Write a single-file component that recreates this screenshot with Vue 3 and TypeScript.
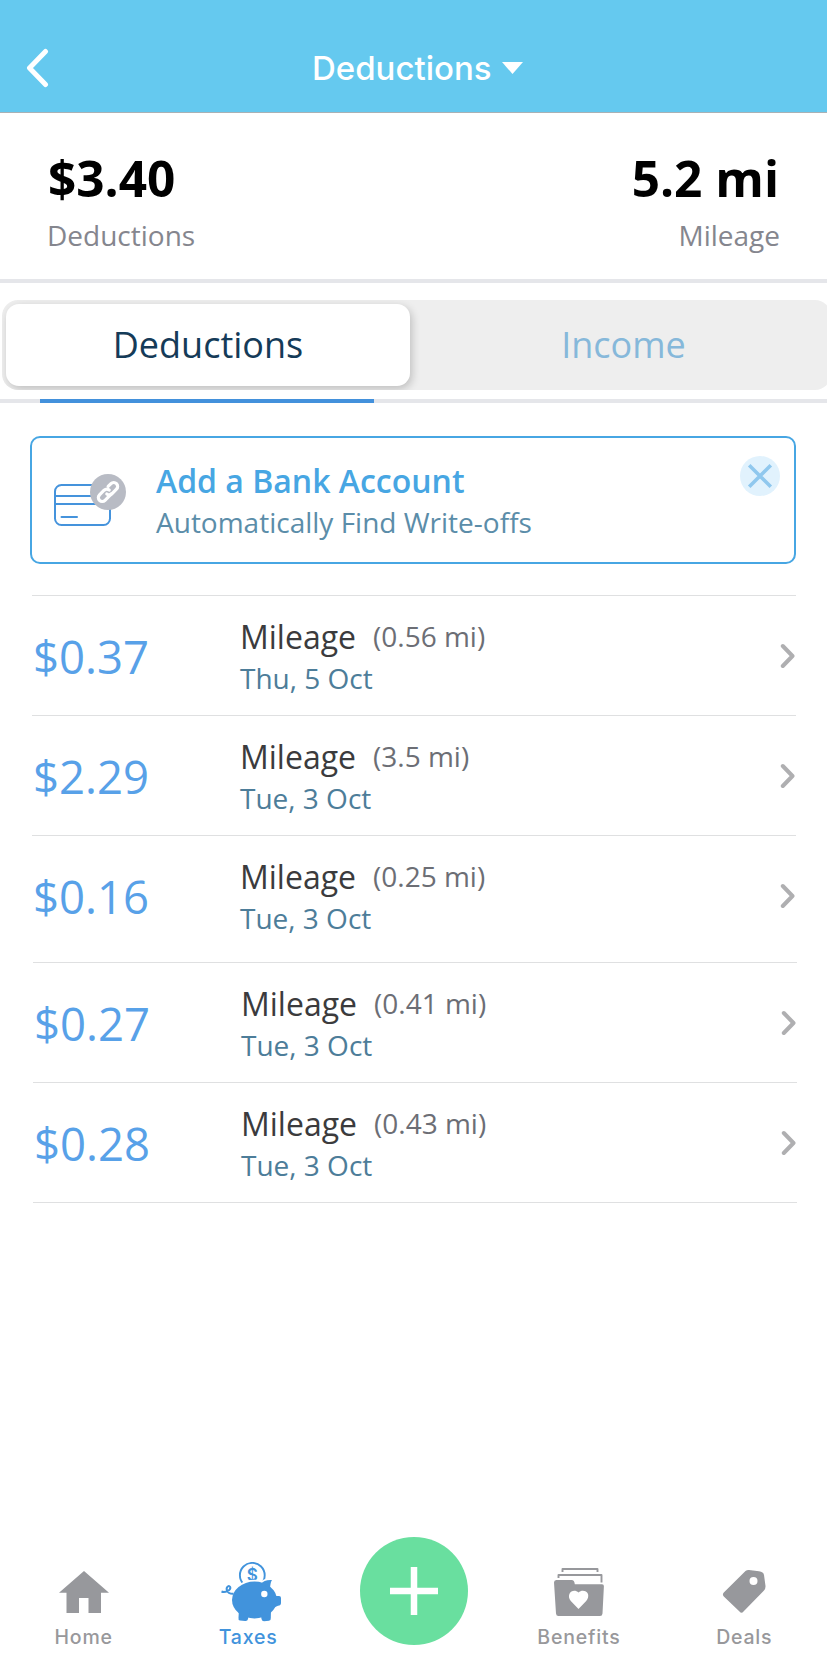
<script setup lang="ts">
import { ref } from 'vue'

interface Entry {
  amount: string
  distance: string
  date: string
}

const groups: Entry[][] = [
  [
    { amount: '$0.37', distance: '(0.56 mi)', date: 'Thu, 5 Oct' },
    { amount: '$2.29', distance: '(3.5 mi)', date: 'Tue, 3 Oct' },
    { amount: '$0.16', distance: '(0.25 mi)', date: 'Tue, 3 Oct' },
  ],
  [
    { amount: '$0.27', distance: '(0.41 mi)', date: 'Tue, 3 Oct' },
    { amount: '$0.28', distance: '(0.43 mi)', date: 'Tue, 3 Oct' },
  ],
]

const tabs = ['Deductions', 'Income']
const activeTab = ref('Deductions')
</script>

<template>
  <div class="screen">
    <header class="topbar">
      <svg class="back" width="24" height="40" viewBox="0 0 24 40">
        <path d="M20.5 3.5 L4.5 20 L20.5 36.5" />
      </svg>
      <h1 class="title">Deductions</h1>
      <svg class="caret" width="21" height="12" viewBox="0 0 21 12"><path d="M0 0H21L10.5 12Z" /></svg>
    </header>

    <section class="stats">
      <div class="stat">
        <div class="stat-value">$3.40</div>
        <div class="stat-label">Deductions</div>
      </div>
      <div class="stat right">
        <div class="stat-value">5.2 mi</div>
        <div class="stat-label">Mileage</div>
      </div>
    </section>

    <nav class="tabs-wrap">
      <div class="tabs">
        <button
          v-for="tab in tabs"
          :key="tab"
          class="tab"
          :class="{ active: tab === activeTab }"
          @click="activeTab = tab"
        >{{ tab }}</button>
      </div>
    </nav>
    <div class="track"><div class="indicator"></div></div>

    <section class="banner">
      <svg class="card-icon" width="74" height="60" viewBox="0 0 74 60">
        <g fill="none" stroke="#4593dc" stroke-width="2">
          <rect x="3" y="15" width="55" height="40" rx="6.5" />
          <path d="M3 26H58M3 34H58" />
          <path d="M9.500 47H25" stroke-linecap="round" />
        </g>
        <circle cx="56" cy="22" r="18" fill="#b8bbc4" />
        <g transform="translate(56 22) rotate(-45)" fill="none" stroke="#fff" stroke-width="3.200" stroke-linecap="round">
          <path d="M1 3.800H-8A3.900 3.900 0 0 1 -8 -4H-1.500A4 4 0 0 1 2.300 -.6" />
          <path d="M-1 -3.800M4 -3.800H8A3.900 3.900 0 0 1 8 4H1.500A4 4 0 0 1 -2.300 .6" />
        </g>
      </svg>
      <div class="banner-text">
        <div class="banner-title">Add a Bank Account</div>
        <div class="banner-sub">Automatically Find Write-offs</div>
      </div>
      <svg class="close" width="40" height="40" viewBox="0 0 40 40">
        <circle cx="20" cy="20" r="20" fill="#e1f2fd" />
        <path d="M9.200 9.200L30.800 30.800M30.800 9.200L9.200 30.800" stroke="#90c8ee" stroke-width="3.600" />
      </svg>
    </section>

    <main class="list">
      <div v-for="(group, g) in groups" :key="g" class="group">
        <article v-for="(entry, i) in group" :key="i" class="row">
          <div class="amount">{{ entry.amount }}</div>
          <div class="info">
            <div class="line">
              <span class="kind">Mileage</span>
              <span class="distance">{{ entry.distance }}</span>
            </div>
            <div class="date">{{ entry.date }}</div>
          </div>
          <svg class="chevron" width="16" height="26" viewBox="0 0 16 26">
            <path d="M2.800 3L12.500 13L2.800 23" />
          </svg>
        </article>
      </div>
    </main>

    <footer class="bottom">
      <a class="item home">
        <svg width="60" height="60" viewBox="0 0 60 60">
          <path fill="#97989c" d="M30 9L55 30.700H47V51H34.500V36H25V51H12.500V30.700H5Z" />
        </svg>
        <span>Home</span>
      </a>
      <a class="item current">
        <svg width="60" height="60" viewBox="0 0 60 60">
          <circle cx="31.300" cy="13.300" r="12.400" fill="none" stroke="#4193dc" stroke-width="1.900" />
          <text x="31.300" y="19.300" text-anchor="middle" class="coin">$</text>
          <g stroke="#fff" stroke-width="3.600" fill="#fff" stroke-linejoin="round">
            <ellipse cx="33.500" cy="38" rx="22.500" ry="18.500" />
            <path d="M40 22Q43 17.500 51 18L49.500 26Z" />
          </g>
          <g fill="#4193dc">
            <ellipse cx="33.500" cy="38" rx="22.500" ry="18.500" />
            <path d="M40 22Q43 17.500 51 18Q49.500 20 49 26Z" />
            <path d="M52 33.500C54 34 55 34 58 34Q60 34 60 36V41Q60 43.500 57 43.800L52 46Z" />
            <path d="M18 47H29L27 57Q26.500 59.500 24 59L19 58.500Q17 58 17.500 55.500Z" />
            <path d="M39 47H50L49.800 56Q50 58.500 48 58.700L43 59.300Q41 59.300 40.500 57Z" />
          </g>
          <path d="M0.500 29.500C4 31 10 28.500 9.300 25.300C8.600 22.500 4.500 25 6 28.500C7 31 9.500 32 12.500 31.800" fill="none" stroke="#4193dc" stroke-width="2" />
          <circle cx="43.300" cy="32" r="3.200" fill="#fff" />
        </svg>
        <span>Taxes</span>
      </a>
      <button class="fab" aria-label="Add">
        <svg width="48" height="48" viewBox="0 0 48 48">
          <path d="M24 0V48M0 24H48" stroke="#fff" stroke-width="6.500" />
        </svg>
      </button>
      <a class="item benefits">
        <svg width="60" height="60" viewBox="0 0 60 60">
          <g fill="none" stroke="#97989c" stroke-width="1.900" stroke-linejoin="round">
            <path d="M13.500 10V7H48.500V10" />
            <path d="M9.500 16V13H52.500V20.500" />
          </g>
          <path fill="#97989c" d="M7.300 18H22.500Q25.500 18 25.800 22.300H53Q55 22.300 54.900 24.300L53.500 51.500Q53.300 54 51 54H9.500Q7.200 54 7 51.500L5 20.500Q5 18 7.300 18Z" />
          <path fill="#fff" d="M29.500 47L21.800 39Q19 35.500 20.400 32C22 28.500 26.500 27.700 29.500 30.500C32.500 27.700 37.500 28.500 39 32Q40 35.500 37.200 39Z" />
        </svg>
        <span>Benefits</span>
      </a>
      <a class="item">
        <svg width="60" height="60" viewBox="0 0 60 60">
          <path fill="#97989c" d="M31.500 9Q33 7.800 35 8L45 9.200Q49.500 9.800 50 13L51.500 24Q51.700 26.500 50 28.500L29.500 49.500Q27.500 52 25.500 49.500L9.800 34.500Q8 32.500 9.800 30.500Z" />
          <circle cx="39.500" cy="19" r="4" fill="#fff" />
        </svg>
        <span>Deals</span>
      </a>
    </footer>
  </div>
</template>

<style>
body {
  margin: 0;
  background: #fff;
}
</style>

<style scoped>
.screen {
  box-sizing: border-box;
  width: 827px;
  height: 1676px;
  display: flex;
  flex-direction: column;
  overflow: hidden;
  background: #fff;
  font-family: "Open Sans", "Noto Sans", sans-serif;
}
.topbar {
  box-sizing: border-box;
  height: 113px;
  flex: none;
  display: grid;
  grid-template-columns: 312px auto 1fr;
  align-items: center;
  padding-top: 24px;
  background: #65c9ef;
  border-bottom: 1px solid #a9b1b5;
}
.back {
  margin-left: 25px;
}
.back path {
  fill: none;
  stroke: #fff;
  stroke-width: 5;
  stroke-linecap: round;
  stroke-linejoin: round;
}
.title {
  margin: 0;
  font: 550 33px/40px Inter, "Open Sans", sans-serif;
  color: #fff;
}
.caret {
  margin-left: 10px;
  fill: #fff;
}
.stats {
  box-sizing: border-box;
  height: 170px;
  flex: none;
  display: flex;
  justify-content: space-between;
  padding: 31px 47px 0;
  border-bottom: 4px solid #e5e6ea;
}
.right {
  text-align: right;
}
.stat-value {
  padding: 0 1px;
  font-size: 49.500px;
  line-height: 68px;
  font-weight: 700;
  color: #000;
}
.stat-label {
  margin-top: 4px;
  font-size: 28px;
  line-height: 38px;
  color: #85868e;
}
.tabs-wrap {
  padding: 17px 0 9px 2px;
}
.tabs {
  box-sizing: border-box;
  width: 829px;
  height: 90px;
  display: grid;
  grid-template-columns: 404px 1fr;
  padding: 4px;
  border-radius: 16px;
  background: #eee;
  overflow: hidden;
}
.tab {
  border: 0;
  padding: 0 0 1px;
  background: none;
  border-radius: 13px;
  font: 400 36px/49px "Open Sans", "Noto Sans", sans-serif;
  color: #86b8da;
}
.tab.active {
  background: #fff;
  box-shadow: 2px 3px 9px rgba(0, 0, 0, 0.2);
  color: #153b58;
}
.tab:last-child {
  padding-left: 10px;
}
.track {
  height: 4px;
  flex: none;
  padding-left: 40px;
  background: #e5e6ea;
}
.indicator {
  width: 334px;
  height: 4px;
  background: #4391dc;
}
.banner {
  box-sizing: border-box;
  height: 128px;
  flex: none;
  display: flex;
  margin: 33px 31px 0 30px;
  border: 2px solid #47a6e3;
  border-radius: 10px;
}
.card-icon {
  margin: 32px 0 0 20px;
}
.banner-text {
  flex: 1;
  margin: 22px 0 0 30px;
}
.banner-title {
  font-size: 32px;
  line-height: 42px;
  font-weight: 600;
  color: #47a6e3;
}
.banner-sub {
  font-size: 28px;
  line-height: 40px;
  color: #5b8da9;
}
.close {
  margin: 18px 14px 0 0;
}
.list {
  padding-top: 31px;
}
.group {
  width: 764px;
  margin-left: 32px;
}
.group:last-child {
  margin-left: 33px;
  border-bottom: 1px solid #dfe0e1;
}
.row {
  box-sizing: border-box;
  height: 120px;
  display: grid;
  grid-template-columns: 208px 1fr 16px;
  border-top: 1px solid #dfe0e1;
}
.group:first-child .row:last-child {
  height: 127px;
}
.amount {
  padding: 30px 0 0 1px;
  font-size: 45.500px;
  line-height: 60px;
  color: #58a1e8;
}
.info {
  padding-top: 20px;
}
.line {
  display: flex;
  gap: 17px;
}
.kind {
  font-size: 32px;
  line-height: 42px;
  color: #3b3b3d;
}
.distance {
  font-size: 28px;
  line-height: 41px;
  color: #6c6e75;
}
.date {
  font-size: 28px;
  line-height: 40px;
  color: #4d7d99;
}
.chevron {
  margin-top: 47px;
}
.chevron path {
  fill: none;
  stroke: #afafb1;
  stroke-width: 4;
  stroke-linecap: round;
  stroke-linejoin: round;
}
.bottom {
  height: 139px;
  flex: none;
  margin-top: auto;
  display: grid;
  grid-template-columns: repeat(5, 1fr);
  justify-items: center;
  align-items: start;
}
.item {
  display: flex;
  flex-direction: column;
  align-items: center;
  padding-top: 25px;
  font: 450 19.500px/24px Inter, "Open Sans", sans-serif;
  letter-spacing: 0.8px;
  color: #98989b;
}
.item span {
  margin-top: 3px;
}
.home {
  padding-left: 2px;
}
.current {
  color: #4193dc;
}
.current svg {
  margin-left: 6px;
}
.coin {
  font: 600 17px Inter, sans-serif;
  letter-spacing: 0;
  fill: #4193dc;
}
.fab {
  width: 108px;
  height: 108px;
  display: grid;
  place-items: center;
  margin-left: 1px;
  padding: 0;
  border: 0;
  border-radius: 50%;
  background: #69df9f;
}
</style>
